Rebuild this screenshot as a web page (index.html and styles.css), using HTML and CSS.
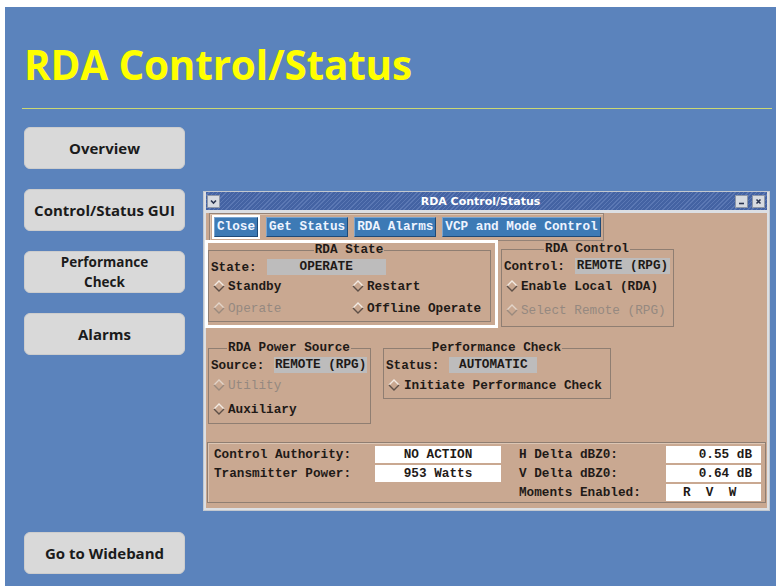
FILE: index.html
```html
<!DOCTYPE html>
<html lang="en">
<head>
    <meta charset="UTF-8">
    <meta name="viewport" content="width=device-width, initial-scale=1.0">
    <title>RDA Control/Status</title>
    <link rel="stylesheet" href="styles.css">
</head>
<body>
<div class="slide">
    <h1 class="slide-title">RDA Control/Status</h1>
    <div class="rule"></div>

    <div class="content">
        <div class="sidebar">
            <a href="#" class="nav-btn">Overview</a>
            <a href="#" class="nav-btn">Control/Status GUI</a>
            <a href="#" class="nav-btn two-line">Performance<br>Check</a>
            <a href="#" class="nav-btn">Alarms</a>
            <a href="#" class="nav-btn last">Go to Wideband</a>
        </div>

        <div class="window">
            <div class="titlebar">
                <span class="tb-btn">
                    <svg viewBox="0 0 11 11"><path d="M3 4.5L5.5 7L8 4.5" class="tb-ico"/></svg>
                </span>
                <span class="tb-title">RDA Control/Status</span>
                <span class="tb-btn">
                    <svg viewBox="0 0 11 11"><path d="M3 7.5H8" class="tb-ico"/></svg>
                </span>
                <span class="tb-btn">
                    <svg viewBox="0 0 11 11"><path d="M3.5 3.5L7.5 7.5M7.5 3.5L3.5 7.5" class="tb-ico"/></svg>
                </span>
            </div>

            <div class="win-body">
                <div class="toolbar">
                    <span class="focus"><span class="x-btn">Close</span></span>
                    <span class="x-btn">Get Status</span>
                    <span class="x-btn">RDA Alarms</span>
                    <span class="x-btn">VCP and Mode Control</span>
                </div>

                <div class="group-row first">
                    <div class="selected">
                        <fieldset class="group state">
                            <legend>RDA State</legend>
                            <div class="field"><span class="lbl">State:</span><span class="val w-state">OPERATE</span></div>
                            <div class="opts two-col">
                                <span class="opt"><svg class="dia" viewBox="0 0 12 12"><path class="hi" d="M1 6L6 1L11 6"/><path class="lo" d="M1 6L6 11L11 6"/></svg>Standby</span>
                                <span class="opt"><svg class="dia" viewBox="0 0 12 12"><path class="hi" d="M1 6L6 1L11 6"/><path class="lo" d="M1 6L6 11L11 6"/></svg>Restart</span>
                                <span class="opt off"><svg class="dia" viewBox="0 0 12 12"><path class="hi" d="M1 6L6 1L11 6"/><path class="lo" d="M1 6L6 11L11 6"/></svg>Operate</span>
                                <span class="opt"><svg class="dia" viewBox="0 0 12 12"><path class="hi" d="M1 6L6 1L11 6"/><path class="lo" d="M1 6L6 11L11 6"/></svg>Offline Operate</span>
                            </div>
                        </fieldset>
                    </div>

                    <fieldset class="group control">
                        <legend>RDA Control</legend>
                        <div class="field"><span class="lbl">Control:</span><span class="val w-control">REMOTE (RPG)</span></div>
                        <div class="opts tall">
                            <span class="opt"><svg class="dia" viewBox="0 0 12 12"><path class="hi" d="M1 6L6 1L11 6"/><path class="lo" d="M1 6L6 11L11 6"/></svg>Enable Local (RDA)</span>
                            <span class="opt off"><svg class="dia" viewBox="0 0 12 12"><path class="hi" d="M1 6L6 1L11 6"/><path class="lo" d="M1 6L6 11L11 6"/></svg>Select Remote (RPG)</span>
                        </div>
                    </fieldset>
                </div>

                <div class="group-row second">
                    <fieldset class="group power">
                        <legend>RDA Power Source</legend>
                        <div class="field"><span class="lbl">Source:</span><span class="val w-source">REMOTE (RPG)</span></div>
                        <div class="opts tall">
                            <span class="opt off"><svg class="dia" viewBox="0 0 12 12"><path class="hi" d="M1 6L6 1L11 6"/><path class="lo" d="M1 6L6 11L11 6"/></svg>Utility</span>
                            <span class="opt"><svg class="dia" viewBox="0 0 12 12"><path class="hi" d="M1 6L6 1L11 6"/><path class="lo" d="M1 6L6 11L11 6"/></svg>Auxiliary</span>
                        </div>
                    </fieldset>

                    <fieldset class="group perf">
                        <legend>Performance Check</legend>
                        <div class="field"><span class="lbl">Status:</span><span class="val w-status">AUTOMATIC</span></div>
                        <div class="opts tall">
                            <span class="opt"><svg class="dia" viewBox="0 0 12 12"><path class="hi" d="M1 6L6 1L11 6"/><path class="lo" d="M1 6L6 11L11 6"/></svg>Initiate Performance Check</span>
                        </div>
                    </fieldset>
                </div>

                <div class="readout">
                    <span class="r-lbl">Control Authority:</span>
                    <span class="r-val">NO ACTION</span>
                    <span class="r-lbl right">H Delta dBZ0:</span>
                    <span class="r-val num">0.55 dB</span>

                    <span class="r-lbl">Transmitter Power:</span>
                    <span class="r-val">953 Watts</span>
                    <span class="r-lbl right">V Delta dBZ0:</span>
                    <span class="r-val num">0.64 dB</span>

                    <span></span>
                    <span></span>
                    <span class="r-lbl right">Moments Enabled:</span>
                    <span class="r-val moments">R  V  W</span>
                </div>
            </div>
        </div>
    </div>
</div>
</body>
</html>
```

FILE: styles.css
```css
body {
    margin: 0;
    background: #fff;
}

.slide {
    margin: 7px 0 0 5px;
    height: 579px;
    background: #5b83bc;
    overflow: hidden;
    font-family: 'Open Sans', sans-serif;
}

.slide-title {
    margin: 34px 0 0 0;
    padding-left: 19px;
    font-size: 40.5px;
    line-height: 48px;
    font-weight: 700;
    letter-spacing: -0.2px;
    color: #ffff00;
}

.rule {
    margin: 19px 4px 0 17px;
    height: 1px;
    background: #cbd873; /* yellow-green line */
}

.content {
    display: flex;
    margin-top: 18px;
    height: 447px;
}

/* left navigation */
.sidebar {
    display: flex;
    flex-direction: column;
    gap: 20px;
    width: 161px;
    margin-left: 19px;
}

.nav-btn {
    display: flex;
    align-items: center;
    justify-content: center;
    height: 42px;
    box-sizing: border-box;
    background: #d9d9d9;
    border: 1px solid #cdcdcd;
    border-radius: 6px;
    color: #1b1b1b;
    font-size: 15px;
    font-weight: 700;
    text-decoration: none;
    text-align: center;
}

.nav-btn.two-line {
    font-size: 13.5px;
    line-height: 20px;
}

.nav-btn.last {
    margin-top: auto;
}

/* the X window */
.window {
    width: 567px;
    box-sizing: border-box;
    margin: 64px 0 0 18px;
    align-self: flex-start;
    background: #dcdfe3;
    border: 1px solid #c3c8cf;
    padding: 0 2px 2px 2px;
}

.titlebar {
    display: flex;
    align-items: center;
    height: 18px;
    padding: 0 2px 0 1px;
    gap: 4px;
    background: repeating-linear-gradient(135deg, #4463a3 0 2px, #5b78b4 2px 3px);
}

.tb-btn {
    width: 13px;
    height: 13px;
    box-sizing: border-box;
    background: #d7dbe1;
    border: 1px solid #8e97a7;
    display: flex;
}

.tb-btn svg {
    width: 11px;
    height: 11px;
}

.tb-ico {
    fill: none;
    stroke: #2b3550;
    stroke-width: 1.6;
}

.tb-title {
    flex: 1;
    text-align: center;
    padding-left: 6px;
    color: #fff;
    font-family: 'DejaVu Sans', sans-serif;
    font-weight: bold;
    font-size: 11px;
}

.win-body {
    background: #c9a891;
    padding-bottom: 5px;
    font-family: 'Liberation Mono', monospace;
    font-size: 12.7px;
    font-weight: bold;
    color: #1f1a17;
}

.toolbar {
    display: flex;
    align-items: center;
    gap: 6px;
    width: fit-content;
    height: 28px;
    box-sizing: border-box;
    margin: 3px 0 0 3px;
    padding: 0 2px;
    border: 1px solid #958377;
    box-shadow: inset 1px 1px 0 #dcc6b4;
}

.focus {
    display: flex;
    border: 2px solid #fff;
}

.x-btn {
    display: block;
    height: 20px;
    box-sizing: border-box;
    line-height: 18px;
    padding: 0 2px;
    background: #3d7ab5;
    color: #eef4ff;
    border: 1px solid;
    border-color: #79a4cf #1e4a78 #1e4a78 #79a4cf;
    white-space: pre;
}

.group-row {
    display: flex;
    align-items: flex-start;
}

.group-row.first {
    margin-top: -1px;
}

.group-row.second {
    margin-top: 13px;
}

.selected {
    margin-left: -1px;
    border: 3px solid #fff;
    padding: 0 4px 3px 0;
}

.group {
    margin: 0;
    min-width: 0;
    box-sizing: border-box;
    border: 1px solid #8f7e72;
    padding: 2px 3px 2px 2px;
}

.group legend {
    margin: 0 auto;
    padding: 0 1px;
    line-height: 14px;
}

.state { width: 283px; }
.control { width: 173px; margin: 2px 0 0 3px; padding-bottom: 4px; }
.power { width: 163px; margin-left: 2px; }
.perf { width: 228px; margin-left: 12px; padding-bottom: 1px; }

.field {
    display: flex;
    align-items: center;
    height: 16px;
}

.lbl {
    margin-right: 10px;
}

.val {
    height: 16px;
    line-height: 16px;
    text-align: center;
    background: #bdbcbc;
    white-space: pre;
}

.w-state { width: 119px; }
.w-control { width: 96px; }
.w-source { width: 94px; }
.w-status { width: 88px; }

.opts {
    padding-left: 2px;
}

.opts.two-col {
    display: grid;
    grid-template-columns: 139px 1fr;
}

.opt {
    display: flex;
    align-items: center;
    gap: 3px;
    height: 22px;
    white-space: pre;
}

.opts.tall .opt {
    height: 24px;
}

.perf .opt {
    gap: 4px;
}

.dia {
    width: 12px;
    height: 12px;
    flex: none;
}

.dia path {
    fill: none;
    stroke-width: 1.4;
}

.dia .hi { stroke: #f3ebe3; }
.dia .lo { stroke: #5e5048; }

.opt.off { color: #958880; font-weight: normal; }
.opt.off .hi { stroke: #e2d4c8; }
.opt.off .lo { stroke: #9a8a7e; }

.readout {
    display: grid;
    grid-template-columns: 161px 126px 165px 95px;
    grid-auto-rows: 17px;
    row-gap: 2px;
    width: 559px;
    box-sizing: border-box;
    margin: 18px 0 0 1px;
    padding: 3px 4px 1px 6px;
    border: 1px solid #8f7e72;
    box-shadow: inset 1px 1px 0 #dcc6b4;
}

.r-lbl {
    line-height: 17px;
    white-space: pre;
}

.r-lbl.right {
    padding-left: 18px;
}

.r-val {
    background: #fff;
    line-height: 17px;
    text-align: center;
    white-space: pre;
}

.r-val.num {
    text-align: right;
    padding-right: 9px;
}

.r-val.moments {
    text-align: left;
    padding-left: 17px;
}
```
